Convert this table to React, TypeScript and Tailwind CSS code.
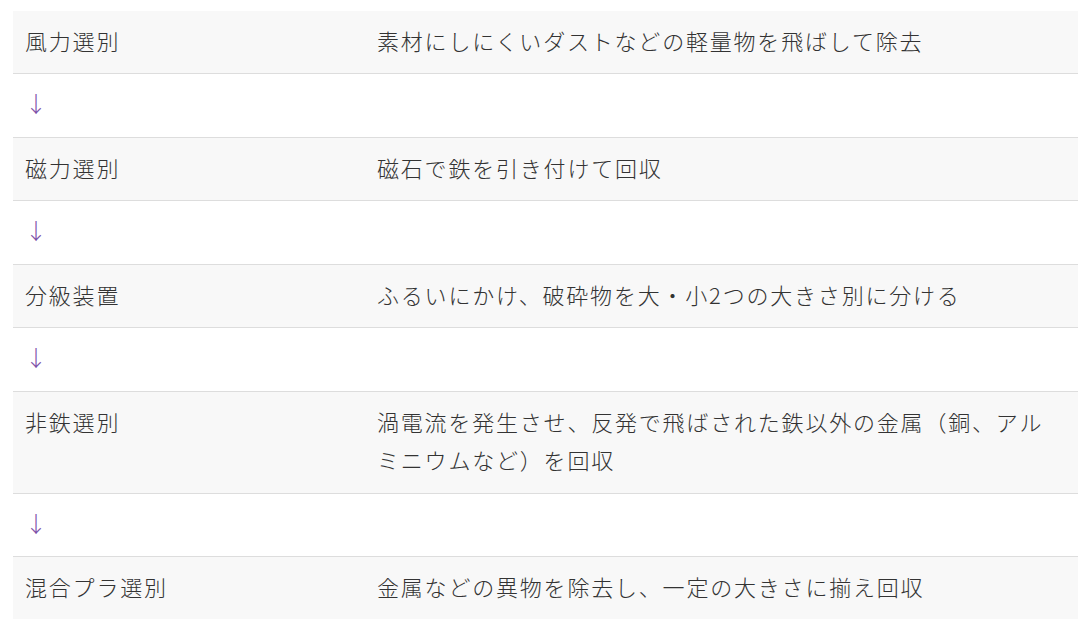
import React from "react";

const rows: { a: string; b: string; arrow?: boolean }[] = [
  { a: "風力選別", b: "素材にしにくいダストなどの軽量物を飛ばして除去" },
  { a: "↓", b: "", arrow: true },
  { a: "磁力選別", b: "磁石で鉄を引き付けて回収" },
  { a: "↓", b: "", arrow: true },
  { a: "分級装置", b: "ふるいにかけ、破砕物を大・小2つの大きさ別に分ける" },
  { a: "↓", b: "", arrow: true },
  { a: "非鉄選別", b: "渦電流を発生させ、反発で飛ばされた鉄以外の金属（銅、アルミニウムなど）を回収" },
  { a: "↓", b: "", arrow: true },
  { a: "混合プラ選別", b: "金属などの異物を除去し、一定の大きさに揃え回収" },
];

export default function App() {
  return (
    <div className="w-[1090px] h-[619px] bg-white pt-[10.5px] pl-[13px] overflow-hidden">
      <table
        className="w-[1065px] border-collapse text-[22px] leading-[38.5px] tracking-[1.8px] text-[#333333] font-light"
        style={{ fontFamily: '"Noto Sans CJK JP", "Noto Sans", sans-serif' }}
      >
        <tbody>
          {rows.map((r, i) => (
            <tr
              key={i}
              className={`${i % 2 === 0 ? "bg-[#f8f8f8]" : "bg-white"} ${i < rows.length - 1 ? "border-b border-[#dddddd]" : ""}`}
            >
              <td className="w-[352px] px-[12px] pt-[10px] pb-[14px] align-top">
                {r.arrow ? (
                  <span className="relative -top-[1px] text-[#7d4fa8] tracking-normal">↓</span>
                ) : (
                  r.a
                )}
              </td>
              <td className="px-[12px] pt-[10px] pb-[14px] align-top">{r.b}</td>
            </tr>
          ))}
        </tbody>
      </table>
    </div>
  );
}
